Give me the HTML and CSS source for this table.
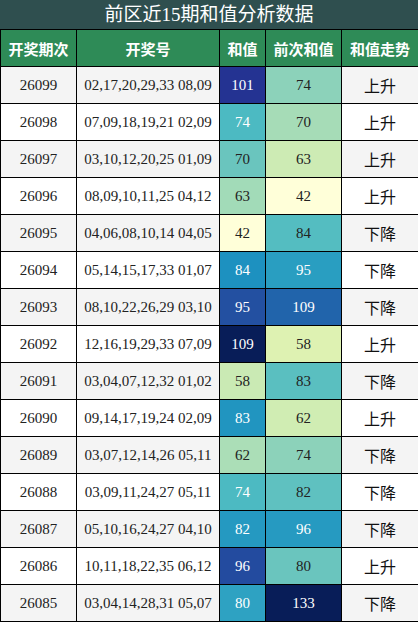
FILE: index.html
```html
<!DOCTYPE html>
<html lang="zh">
<head>
  <meta charset="utf-8">
  <title>前区近15期和值分析数据</title>
  <link rel="stylesheet" href="styles.css">
</head>
<body>
  <div class="panel">
    <div class="title">前区近15期和值分析数据</div>
    <table class="sumTable">
      <colgroup>
        <col class="cIssue"><col class="cNums"><col class="cSum"><col class="cPrev"><col class="cTrend">
      </colgroup>
      <thead>
        <tr><th>开奖期次</th><th>开奖号</th><th>和值</th><th>前次和值</th><th>和值走势</th></tr>
      </thead>
      <tbody>
        <tr><td>26099</td><td>02,17,20,29,33 08,09</td><td class="light" style="background:#243392">101</td><td style="background:#8cd2ba">74</td><td class="trend">上升</td></tr>
        <tr><td>26098</td><td>07,09,18,19,21 02,09</td><td class="light" style="background:#4cbac2">74</td><td style="background:#a6dcb7">70</td><td class="trend">上升</td></tr>
        <tr><td>26097</td><td>03,10,12,20,25 01,09</td><td style="background:#6ac5be">70</td><td style="background:#cdebb4">63</td><td class="trend">上升</td></tr>
        <tr><td>26096</td><td>08,09,10,11,25 04,12</td><td style="background:#a2dbb8">63</td><td style="background:#ffffd9">42</td><td class="trend">上升</td></tr>
        <tr><td>26095</td><td>04,06,08,10,14 04,05</td><td style="background:#ffffd9">42</td><td style="background:#54bdc1">84</td><td class="trend">下降</td></tr>
        <tr><td>26094</td><td>05,14,15,17,33 01,07</td><td class="light" style="background:#1d91c0">84</td><td class="light" style="background:#299ec1">95</td><td class="trend">下降</td></tr>
        <tr><td>26093</td><td>08,10,22,26,29 03,10</td><td class="light" style="background:#2350a1">95</td><td class="light" style="background:#2164ab">109</td><td class="trend">下降</td></tr>
        <tr><td>26092</td><td>12,16,19,29,33 07,09</td><td class="light" style="background:#081d58">109</td><td style="background:#def2b2">58</td><td class="trend">上升</td></tr>
        <tr><td>26091</td><td>03,04,07,12,32 01,02</td><td style="background:#caeab4">58</td><td style="background:#5abfc0">83</td><td class="trend">下降</td></tr>
        <tr><td>26090</td><td>09,14,17,19,24 02,09</td><td class="light" style="background:#2195c0">83</td><td style="background:#d0edb3">62</td><td class="trend">上升</td></tr>
        <tr><td>26089</td><td>03,07,12,14,26 05,11</td><td style="background:#abdeb7">62</td><td style="background:#8cd2ba">74</td><td class="trend">下降</td></tr>
        <tr><td>26088</td><td>03,09,11,24,27 05,11</td><td class="light" style="background:#4cbac2">74</td><td style="background:#5fc1c0">82</td><td class="trend">下降</td></tr>
        <tr><td>26087</td><td>05,10,16,24,27 04,10</td><td class="light" style="background:#2599c1">82</td><td class="light" style="background:#269ac1">96</td><td class="trend">下降</td></tr>
        <tr><td>26086</td><td>10,11,18,22,35 06,12</td><td class="light" style="background:#234b9f">96</td><td style="background:#6ac5be">80</td><td class="trend">上升</td></tr>
        <tr><td>26085</td><td>03,04,14,28,31 05,07</td><td class="light" style="background:#2ea2c2">80</td><td class="light" style="background:#081d58">133</td><td class="trend">下降</td></tr>
      </tbody>
    </table>
  </div>
</body>
</html>
```

FILE: styles.css
```css
body{
  margin: 0;
  background-color: #ffffff;
}
.panel{
  width: 418px;
}
.title{
  height: 29px;
  line-height: 29px;
  background-color: #2f4f4f;
  color: #ffffff;
  text-align: center;
  font-family: "Liberation Serif", "Noto Sans CJK SC", serif;
  font-size: 19px;
}
.sumTable{
  width: 418px;
  border-collapse: collapse;
  table-layout: fixed;
  font-family: "Liberation Serif", "Noto Sans CJK SC", serif;
  font-size: 15px;
  color: #222222;
}
.cIssue{ width: 76px; }
.cNums{ width: 143px; }
.cSum{ width: 46px; }
.cPrev{ width: 76px; }
.cTrend{ width: 77px; }
.sumTable th, .sumTable td{
  border: 1px solid #000000;
  padding: 0;
  text-align: center;
  white-space: nowrap;
}
.sumTable th{
  height: 36px;
  background-color: #2e8b57;
  color: #ffffff;
  font-family: "Noto Sans CJK SC", sans-serif;
  font-size: 15px;
  font-weight: bold;
}
.sumTable td{
  height: 36px;
}
.sumTable tbody tr:nth-child(odd){
  background-color: #f4f4f4;
}
.sumTable tbody tr:nth-child(even){
  background-color: #ffffff;
}
.sumTable td.light{
  color: #ffffff;
}
.sumTable td.trend{
  font-family: "Noto Sans CJK SC", sans-serif;
  font-size: 16px;
  color: #111111;
}
```
